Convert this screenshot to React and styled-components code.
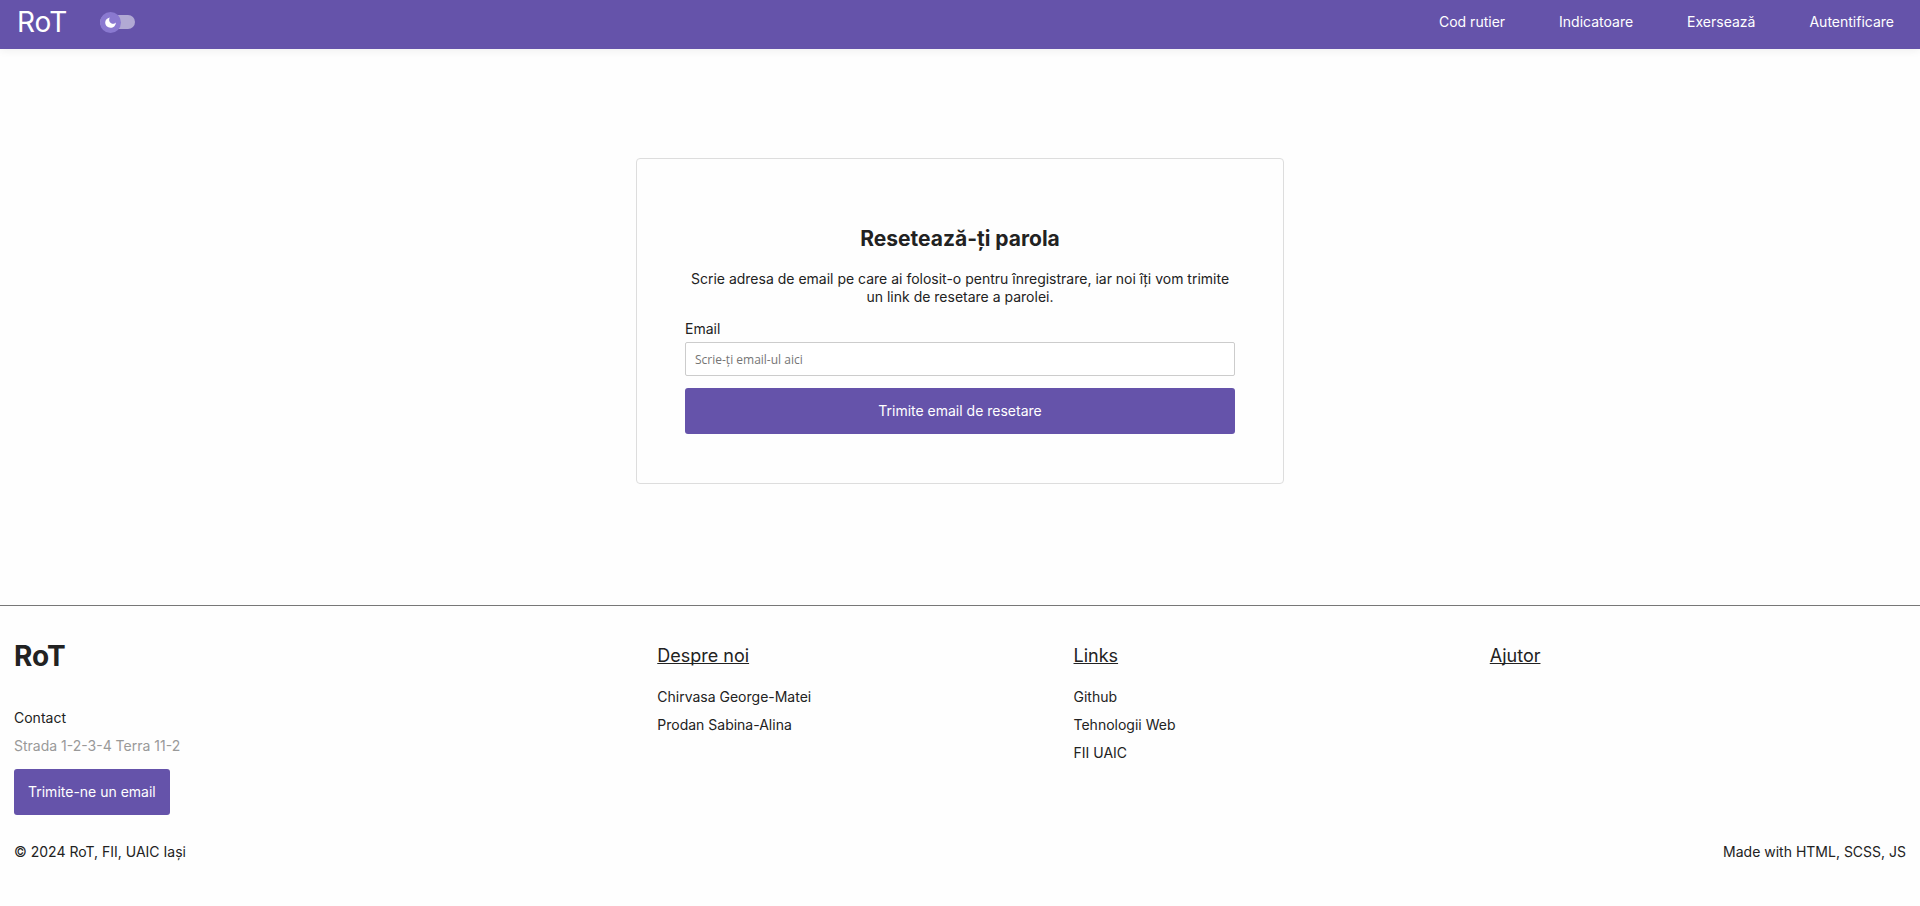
import React from "react";
import styled, { createGlobalStyle } from "styled-components";

const ink = "#222222";
const brand = "#6553aa";

const GlobalStyle = createGlobalStyle`
  *, *::before, *::after { box-sizing: border-box; }
  body {
    margin: 0;
    background: #fefefe;
    color: ${ink};
    font: 400 14px/18px Inter, "Liberation Sans", sans-serif;
  }
  h1, h2, h3, p, ul { margin: 0; padding: 0; }
  ul { list-style: none; }
  a { color: inherit; text-decoration: none; }
`;

const Page = styled.div`
  min-height: 100vh;
  display: flex;
  flex-direction: column;
`;

const Header = styled.header`
  display: flex;
  align-items: center;
  justify-content: space-between;
  padding: 4px 26px 9px 17px;
  background: ${brand};
  color: #ffffff;
  box-shadow: 0 2px 8px rgba(0, 0, 0, 0.06);
`;

const Side = styled.div`
  display: flex;
  align-items: center;
  gap: 33px;
`;

const Logo = styled.a`
  font-size: 28px;
  line-height: 36px;
  font-weight: 400;
`;

const Toggle = styled.label`
  position: relative;
  display: flex;
  align-items: center;
  width: 35px;
  height: 21px;
  cursor: pointer;
`;

const ToggleInput = styled.input`
  position: absolute;
  inset: 0;
  margin: 0;
  opacity: 0;
`;

const Track = styled.span`
  flex: 1;
  height: 14px;
  border-radius: 7px;
  background: #b1a9d4;
`;

const Knob = styled.span`
  position: absolute;
  left: 0;
  top: 0;
  display: grid;
  place-items: center;
  width: 21px;
  height: 21px;
  border-radius: 50%;
  background: #8a79d0;
`;

const NavList = styled.ul`
  display: flex;
  gap: 54px;
`;

const Main = styled.main`
  display: flex;
  justify-content: center;
  padding: 109px 16px 121px;
`;

const Card = styled.form`
  display: flex;
  flex-direction: column;
  width: 100%;
  max-width: 648px;
  padding: 67px 48px 49px;
  border: 1px solid #dddddd;
  border-radius: 4px;
`;

const Title = styled.h1`
  font-size: 21px;
  line-height: 26px;
  font-weight: 700;
  text-align: center;
`;

const Lead = styled.p`
  margin-top: 18px;
  text-align: center;
`;

const Label = styled.label`
  margin-top: 14px;
`;

const Field = styled.input`
  margin-top: 4px;
  height: 34px;
  padding: 0 9px;
  border: 1px solid #cccccc;
  border-radius: 2px;
  background: #ffffff;
  color: ${ink};
  font: 12px "Open Sans", "Noto Sans", sans-serif;
  &::placeholder { color: #757575; opacity: 1; }
`;

const Button = styled.button`
  height: 46px;
  padding: 0 14px;
  border: 0;
  border-radius: 3px;
  background: ${brand};
  color: #ffffff;
  font: inherit;
  cursor: pointer;
`;

const Submit = styled(Button)`
  margin-top: 12px;
`;

const Footer = styled.footer`
  border-top: 1px solid #777777;
  padding: 32px 14px;
`;

const Columns = styled.div`
  display: grid;
  grid-template-columns: 34fr 22fr 22fr 22fr;
`;

const FooterBrand = styled.h2`
  font-size: 28px;
  line-height: 36px;
  font-weight: 700;
`;

const Contact = styled.div`
  display: flex;
  flex-direction: column;
  align-items: flex-start;
  gap: 10px;
  margin-top: 35px;
`;

const Address = styled.p`
  color: #999999;
`;

const MailButton = styled(Button)`
  margin-top: 4px;
`;

const ColumnTitle = styled.h3`
  font-size: 18px;
  line-height: 36px;
  font-weight: 400;
  text-decoration: underline;
  text-decoration-skip-ink: none;
`;

const LinkList = styled.ul`
  display: flex;
  flex-direction: column;
  gap: 10px;
  margin-top: 14px;
`;

const Legal = styled.div`
  display: flex;
  justify-content: space-between;
  margin-top: 28px;
`;

const nav = ["Cod rutier", "Indicatoare", "Exersează", "Autentificare"];

const columns = [
  { title: "Despre noi", links: ["Chirvasa George-Matei", "Prodan Sabina-Alina"] },
  { title: "Links", links: ["Github", "Tehnologii Web", "FII UAIC"] },
  { title: "Ajutor", links: [] },
];

export default function App() {
  return (
    <Page>
      <GlobalStyle />
      <Header>
        <Side>
          <Logo href="#">RoT</Logo>
          <Toggle>
            <ToggleInput type="checkbox" aria-label="Mod întunecat" />
            <Track />
            <Knob>
              <svg width="11" height="11" viewBox="0 0 11 11" fill="#fff" aria-hidden="true">
                <path d="M4.8 0.4C2.2 0.9 0.2 3 0.2 5.6C0.2 8.5 2.6 10.8 5.5 10.8C8.5 10.8 10.8 8.6 10.8 5.4C9.6 6.9 7.7 7.1 6.2 6.2C4.1 5 3.6 2.4 4.8 0.4Z" />
              </svg>
            </Knob>
          </Toggle>
        </Side>
        <nav>
          <NavList>
            {nav.map((item) => (
              <li key={item}><a href="#">{item}</a></li>
            ))}
          </NavList>
        </nav>
      </Header>
      <Main>
        <Card onSubmit={(e) => e.preventDefault()}>
          <Title>Resetează-ți parola</Title>
          <Lead>
            Scrie adresa de email pe care ai folosit-o pentru înregistrare, iar noi îți vom trimite un link de resetare a parolei.
          </Lead>
          <Label htmlFor="email">Email</Label>
          <Field id="email" type="email" placeholder="Scrie-ți email-ul aici" />
          <Submit type="submit">Trimite email de resetare</Submit>
        </Card>
      </Main>
      <Footer>
        <Columns>
          <div>
            <FooterBrand>RoT</FooterBrand>
            <Contact>
              <p>Contact</p>
              <Address>Strada 1-2-3-4 Terra 11-2</Address>
              <MailButton type="button">Trimite-ne un email</MailButton>
            </Contact>
          </div>
          {columns.map((column) => (
            <div key={column.title}>
              <ColumnTitle>{column.title}</ColumnTitle>
              <LinkList>
                {column.links.map((link) => (
                  <li key={link}><a href="#">{link}</a></li>
                ))}
              </LinkList>
            </div>
          ))}
        </Columns>
        <Legal>
          <p>© 2024 RoT, FII, UAIC Iași</p>
          <p>Made with HTML, SCSS, JS</p>
        </Legal>
      </Footer>
    </Page>
  );
}
